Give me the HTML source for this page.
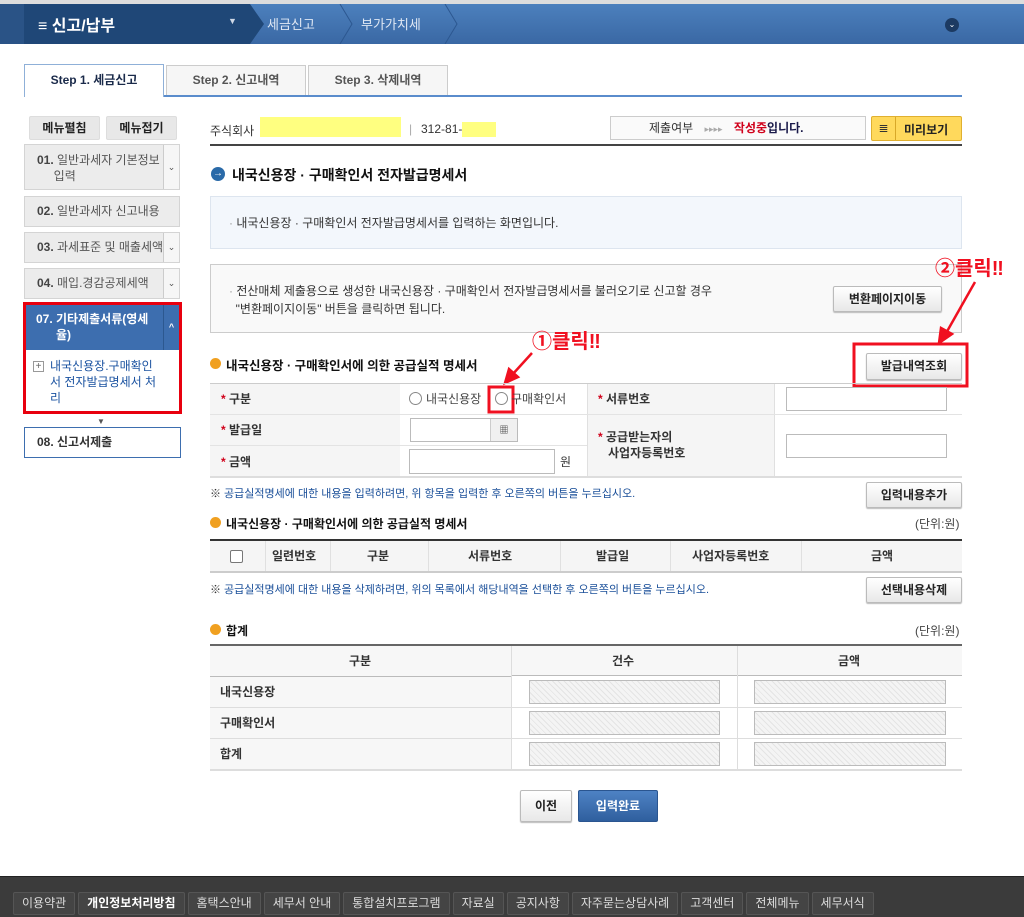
<!DOCTYPE html>
<html><head><meta charset="utf-8"><style>
*{box-sizing:border-box;margin:0;padding:0}
body{width:1024px;height:917px;position:relative;overflow:hidden;background:#fff;font-family:"Liberation Sans","Noto Sans CJK KR",sans-serif;font-size:12px;color:#333}
.a{position:absolute}
.btn{position:absolute;border:1px solid #bbb;background:linear-gradient(#fff,#e8e8e8);font-weight:bold;color:#222;text-align:center;border-radius:2px;box-shadow:0 1px 1px #bbb}
.mi{position:absolute;left:24px;width:156px;background:#ececec;border:1px solid #d4d4d4;color:#555;font-size:12px;padding-left:12px}
.mi b{color:#444}
.arr{position:absolute;right:0;top:0;bottom:0;width:16px;border-left:1px solid #ccc;background:#f6f6f6;font-size:9px;text-align:center}
.red{color:#d0001a}
.hatch{position:absolute;border:1px solid #bbb;background:repeating-linear-gradient(45deg,#f4f4f4 0 3px,#e4e4e4 3px 4px)}
.inp{position:absolute;border:1px solid #bbb;background:#fff}
.lbl{position:absolute;font-weight:bold;color:#333}
.fb{display:inline-block;height:23px;line-height:21px;padding:0 8px;margin-right:3px;border:1px solid #555;background:#444;color:#ddd;font-size:12px;border-radius:2px}
</style></head><body>
<div class="a" style="left:0;top:0;width:1024px;height:4px;background:#ddd"></div>
<div class="a" style="left:0;top:4px;width:1024px;height:40px;background:linear-gradient(#4c80bd,#3a68a4)"></div>
<div class="a" style="left:0;top:4px;width:250px;height:40px;background:#1f4777"></div>
<div class="a" style="left:0;top:4px;width:24px;height:40px;background:#2a5386"></div>
<svg class="a" style="left:240px;top:4px" width="230" height="40"><polyline points="0,0 10,0 24,20 10,40 0,40" fill="#1f4777"/><polyline points="100,0 112,20 100,40" fill="none" stroke="#2c5790"/><polyline points="205,0 217,20 205,40" fill="none" stroke="#2c5790"/></svg>
<div class="a" style="left:38px;top:12px;color:#fff;font-size:16px;font-weight:bold">≡ 신고/납부</div>
<div class="a" style="left:228px;top:16px;color:#cfd8e6;font-size:9px">▼</div>
<div class="a" style="left:267px;top:14px;color:#e0e8f4;font-size:13px">세금신고</div>
<div class="a" style="left:361px;top:14px;color:#e0e8f4;font-size:13px">부가가치세</div>
<div class="a" style="left:945px;top:18px;width:14px;height:14px;border-radius:50%;background:#1c3a62;color:#fff;font-size:8px;text-align:center;line-height:14px">⌄</div>
<div class="a" style="left:24px;top:95px;width:938px;height:2px;background:#5a8ccc"></div>
<div class="a" style="left:24px;top:64px;width:140px;height:33px;border:1px solid #8fb0d8;border-bottom:none;background:#fff;text-align:center;line-height:31px;font-weight:bold;color:#1a2a4a">Step 1. 세금신고</div>
<div class="a" style="left:166px;top:65px;width:140px;height:30px;border:1px solid #ccc;border-bottom:none;background:#f6f6f6;text-align:center;line-height:29px;font-weight:bold;color:#555">Step 2. 신고내역</div>
<div class="a" style="left:308px;top:65px;width:140px;height:30px;border:1px solid #ccc;border-bottom:none;background:#f6f6f6;text-align:center;line-height:29px;font-weight:bold;color:#555">Step 3. 삭제내역</div>
<div class="btn" style="left:29px;top:116px;width:71px;height:24px;line-height:22px;background:#e8e8e8;box-shadow:none;border-color:#ddd">메뉴펼침</div>
<div class="btn" style="left:106px;top:116px;width:71px;height:24px;line-height:22px;background:#e8e8e8;box-shadow:none;border-color:#ddd">메뉴접기</div>
<div class="mi" style="top:144px;height:46px;padding-top:7px;line-height:16px"><b>01.</b> 일반과세자 기본정보<br>&nbsp;&nbsp;&nbsp;&nbsp;&nbsp;입력<div class="arr" style="line-height:44px">⌄</div></div>
<div class="mi" style="top:196px;height:31px;line-height:29px"><b>02.</b> 일반과세자 신고내용</div>
<div class="mi" style="top:232px;height:31px;line-height:29px;overflow:hidden;white-space:nowrap"><b>03.</b> 과세표준 및 매출세액<div class="arr">⌄</div></div>
<div class="mi" style="top:268px;height:31px;line-height:29px"><b>04.</b> 매입.경감공제세액<div class="arr">⌄</div></div>
<div class="a" style="left:23px;top:302px;width:159px;height:112px;border:3px solid #e8000e"></div>
<div class="a" style="left:26px;top:305px;width:153px;height:45px;background:#3d6eaf;color:#fff;font-weight:bold;padding:6px 0 0 10px;line-height:16px;font-size:12px">07. 기타제출서류(영세<br>&nbsp;&nbsp;&nbsp;&nbsp;&nbsp;&nbsp;율)<div style="position:absolute;right:0;top:0;bottom:0;width:16px;border-left:1px solid #2c5890;text-align:center;line-height:45px;font-size:9px">^</div></div>
<div class="a" style="left:33px;top:361px;width:11px;height:11px;border:1px solid #999;font-size:10px;line-height:9px;text-align:center;color:#666">+</div>
<div class="a" style="left:50px;top:358px;color:#1a52a0;line-height:16px;font-size:12px">내국신용장.구매확인<br>서 전자발급명세서 처<br>리</div>
<div class="a" style="left:97px;top:417px;color:#555;font-size:8px">▼</div>
<div class="a" style="left:24px;top:427px;width:157px;height:31px;border:1px solid #3d6eaf;background:#fff;line-height:29px;padding-left:12px;font-weight:bold;color:#333">08. 신고서제출</div>
<div class="a" style="left:210px;top:122px">주식회사</div>
<div class="a" style="left:260px;top:117px;width:141px;height:20px;background:#ffff80"></div>
<div class="a" style="left:409px;top:122px;color:#aaa">|</div>
<div class="a" style="left:421px;top:122px">312-81-</div>
<div class="a" style="left:462px;top:122px;width:34px;height:15px;background:#ffff80"></div>
<div class="a" style="left:610px;top:116px;width:256px;height:24px;border:1px solid #ccc;background:#fafafa;line-height:22px;padding-left:38px">제출여부 <span style="color:#aaa;font-size:9px;margin:0 8px">▸▸▸▸</span> <b class="red">작성중</b><b style="color:#1a1a4a">입니다.</b></div>
<div class="a" style="left:871px;top:116px;width:91px;height:25px;border:1px solid #e0b030;background:#ffd95c;border-radius:2px"><div style="position:absolute;left:0;top:0;width:24px;height:23px;border-right:1px solid #d8a828;text-align:center;line-height:22px">≣</div><b style="position:absolute;left:32px;top:4px;color:#222">미리보기</b></div>
<div class="a" style="left:210px;top:144px;width:752px;height:2px;background:#444"></div>
<div class="a" style="left:211px;top:167px;width:14px;height:14px;border-radius:50%;background:#2a6aa8;color:#fff;font-size:10px;line-height:14px;text-align:center">→</div>
<div class="a" style="left:232px;top:165px;font-size:14px;font-weight:bold;color:#111">내국신용장 · 구매확인서 전자발급명세서</div>
<div class="a" style="left:210px;top:196px;width:752px;height:53px;background:#f3f7fc;border:1px solid #dde5ef;padding:17px 0 0 18px;color:#333"><span style="color:#999">·</span> 내국신용장 · 구매확인서 전자발급명세서를 입력하는 화면입니다.</div>
<div class="a" style="left:210px;top:264px;width:752px;height:69px;background:#f9f9f9;border:1px solid #ccc;padding:17px 0 0 18px;line-height:18px;color:#333"><span style="color:#999">·</span> 전산매체 제출용으로 생성한 내국신용장 · 구매확인서 전자발급명세서를 불러오기로 신고할 경우<br>&nbsp;&nbsp;"변환페이지이동" 버튼을 클릭하면 됩니다.</div>
<div class="btn" style="left:833px;top:286px;width:109px;height:26px;line-height:24px">변환페이지이동</div>
<div class="a red" style="left:935px;top:252px;font-size:20px;font-weight:bold;color:#f01020">②클릭‼</div>
<div class="a red" style="left:532px;top:325px;font-size:20px;font-weight:bold;color:#f01020">①클릭‼</div>
<svg class="a" style="left:0;top:0" width="1024" height="917"><g stroke="#f01020" stroke-width="2.5" fill="#f01020"><line x1="975" y1="282" x2="945" y2="335"/><polygon points="939,343 941,328 952,334"/><line x1="532" y1="353" x2="512" y2="375"/><polygon points="505,383 509,369 518,377"/></g><rect x="489" y="387" width="24" height="25" fill="none" stroke="#f01020" stroke-width="3"/><rect x="854" y="344" width="113" height="42" fill="none" stroke="#f01020" stroke-width="3"/></svg>
<div class="a" style="left:210px;top:358px;width:11px;height:11px;border-radius:50%;background:#f0a020"></div>
<div class="a" style="left:226px;top:355px;font-weight:bold;color:#111;font-size:12.5px">내국신용장 · 구매확인서에 의한 공급실적 명세서</div>
<div class="btn" style="left:866px;top:353px;width:96px;height:27px;line-height:25px">발급내역조회</div>
<div class="a" style="left:210px;top:383px;width:752px;height:95px;border-top:1px solid #ccc;border-bottom:2px solid #ddd"></div>
<div class="a" style="left:210px;top:384px;width:190px;height:92px;background:#f5f5f5"></div>
<div class="a" style="left:587px;top:384px;width:188px;height:92px;background:#f5f5f5;border-left:1px solid #e0e0e0;border-right:1px solid #e0e0e0"></div>
<div class="a" style="left:210px;top:414px;width:377px;height:1px;background:#e3e3e3"></div>
<div class="a" style="left:210px;top:445px;width:377px;height:1px;background:#e3e3e3"></div>
<div class="a" style="left:587px;top:414px;width:375px;height:1px;background:#e3e3e3"></div>
<div class="lbl" style="left:221px;top:390px"><span class="red">*</span> 구분</div>
<div class="lbl" style="left:221px;top:421px"><span class="red">*</span> 발급일</div>
<div class="lbl" style="left:221px;top:453px"><span class="red">*</span> 금액</div>
<div class="a" style="left:409px;top:392px;width:13px;height:13px;border:1px solid #888;border-radius:50%"></div>
<div class="a" style="left:426px;top:390px;color:#444">내국신용장</div>
<div class="a" style="left:495px;top:392px;width:13px;height:13px;border:1px solid #888;border-radius:50%"></div>
<div class="a" style="left:511px;top:390px;color:#444">구매확인서</div>
<div class="inp" style="left:410px;top:418px;width:108px;height:24px"><div style="position:absolute;right:0;top:0;width:27px;height:22px;border-left:1px solid #ccc;background:#f0f0f0;font-size:9px;text-align:center;line-height:22px">▦</div></div>
<div class="inp" style="left:409px;top:449px;width:146px;height:25px"></div>
<div class="a" style="left:560px;top:453px">원</div>
<div class="lbl" style="left:598px;top:390px"><span class="red">*</span> 서류번호</div>
<div class="lbl" style="left:598px;top:429px;line-height:16px"><span class="red">*</span> 공급받는자의<br>&nbsp;&nbsp;&nbsp;사업자등록번호</div>
<div class="inp" style="left:786px;top:387px;width:161px;height:24px"></div>
<div class="inp" style="left:786px;top:434px;width:161px;height:24px"></div>
<div class="a" style="left:210px;top:485px;color:#1a4f99;font-size:11px"><span style="color:#333">※</span> 공급실적명세에 대한 내용을 입력하려면, 위 항목을 입력한 후 오른쪽의 버튼을 누르십시오.</div>
<div class="btn" style="left:866px;top:482px;width:96px;height:26px;line-height:24px">입력내용추가</div>
<div class="a" style="left:210px;top:517px;width:11px;height:11px;border-radius:50%;background:#f0a020"></div>
<div class="a" style="left:226px;top:515px;font-weight:bold;color:#111">내국신용장 · 구매확인서에 의한 공급실적 명세서</div>
<div class="a" style="left:915px;top:515px;color:#444">(단위:원)</div>
<div class="a" style="left:210px;top:539px;width:752px;height:34px;border-top:2px solid #333;border-bottom:2px solid #ccc;background:#f5f5f5;font-weight:bold;color:#333;line-height:30px">
<div class="a" style="left:20px;top:9px;width:13px;height:13px;border:1px solid #777;background:#fff;border-radius:2px"></div>
<span class="a" style="left:62px">일련번호</span><span class="a" style="left:157px">구분</span><span class="a" style="left:258px">서류번호</span><span class="a" style="left:386px">발급일</span><span class="a" style="left:482px">사업자등록번호</span><span class="a" style="left:661px">금액</span>
<div class="a" style="left:55px;top:0;height:30px;border-left:1px solid #e0e0e0"></div><div class="a" style="left:120px;top:0;height:30px;border-left:1px solid #e0e0e0"></div><div class="a" style="left:218px;top:0;height:30px;border-left:1px solid #e0e0e0"></div><div class="a" style="left:350px;top:0;height:30px;border-left:1px solid #e0e0e0"></div><div class="a" style="left:460px;top:0;height:30px;border-left:1px solid #e0e0e0"></div><div class="a" style="left:591px;top:0;height:30px;border-left:1px solid #e0e0e0"></div>
</div>
<div class="a" style="left:210px;top:581px;color:#1a4f99;font-size:11px"><span style="color:#333">※</span> 공급실적명세에 대한 내용을 삭제하려면, 위의 목록에서 해당내역을 선택한 후 오른쪽의 버튼을 누르십시오.</div>
<div class="btn" style="left:866px;top:577px;width:96px;height:26px;line-height:24px">선택내용삭제</div>
<div class="a" style="left:210px;top:624px;width:11px;height:11px;border-radius:50%;background:#f0a020"></div>
<div class="a" style="left:226px;top:622px;font-weight:bold;color:#111">합계</div>
<div class="a" style="left:915px;top:622px;color:#444">(단위:원)</div>
<div class="a" style="left:210px;top:644px;width:752px;height:127px;border-top:2px solid #666;border-bottom:2px solid #ddd;background:#f7f7f7"></div>
<div class="a" style="left:210px;top:676px;width:752px;height:1px;background:#bbb"></div>
<div class="a" style="left:210px;top:707px;width:752px;height:1px;background:#ddd"></div>
<div class="a" style="left:210px;top:738px;width:752px;height:1px;background:#ddd"></div>
<div class="a" style="left:511px;top:646px;width:451px;height:123px;background:#fff"></div>
<div class="a" style="left:511px;top:646px;width:451px;height:30px;background:#f7f7f7;border-bottom:1px solid #bbb"></div>
<div class="a" style="left:511px;top:646px;height:123px;border-left:1px solid #ddd"></div>
<div class="a" style="left:737px;top:646px;height:123px;border-left:1px solid #ddd"></div>
<div class="a" style="left:511px;top:707px;width:451px;height:1px;background:#ddd"></div>
<div class="a" style="left:511px;top:738px;width:451px;height:1px;background:#ddd"></div>
<div class="lbl" style="left:349px;top:652px">구분</div><div class="lbl" style="left:612px;top:652px">건수</div><div class="lbl" style="left:838px;top:652px">금액</div>
<div class="lbl" style="left:220px;top:683px">내국신용장</div><div class="lbl" style="left:220px;top:714px">구매확인서</div><div class="lbl" style="left:220px;top:745px">합계</div>
<div class="hatch" style="left:529px;top:680px;width:191px;height:24px"></div><div class="hatch" style="left:754px;top:680px;width:192px;height:24px"></div>
<div class="hatch" style="left:529px;top:711px;width:191px;height:24px"></div><div class="hatch" style="left:754px;top:711px;width:192px;height:24px"></div>
<div class="hatch" style="left:529px;top:742px;width:191px;height:24px"></div><div class="hatch" style="left:754px;top:742px;width:192px;height:24px"></div>
<div class="btn" style="left:520px;top:790px;width:52px;height:32px;line-height:30px">이전</div>
<div class="a" style="left:578px;top:790px;width:80px;height:32px;line-height:30px;background:linear-gradient(#4e82c4,#2f5f9e);border:1px solid #2a5590;border-radius:2px;color:#fff;font-weight:bold;text-align:center">입력완료</div>
<div class="a" style="left:0;top:876px;width:1024px;height:41px;background:#3b3b3b;border-top:1px solid #222;padding:15px 0 0 13px;white-space:nowrap;font-size:0">
<span class="fb">이용약관</span><span class="fb" style="color:#fff;font-weight:bold">개인정보처리방침</span><span class="fb">홈택스안내</span><span class="fb">세무서 안내</span><span class="fb">통합설치프로그램</span><span class="fb">자료실</span><span class="fb">공지사항</span><span class="fb">자주묻는상담사례</span><span class="fb">고객센터</span><span class="fb">전체메뉴</span><span class="fb">세무서식</span>
</div>
</body></html>
